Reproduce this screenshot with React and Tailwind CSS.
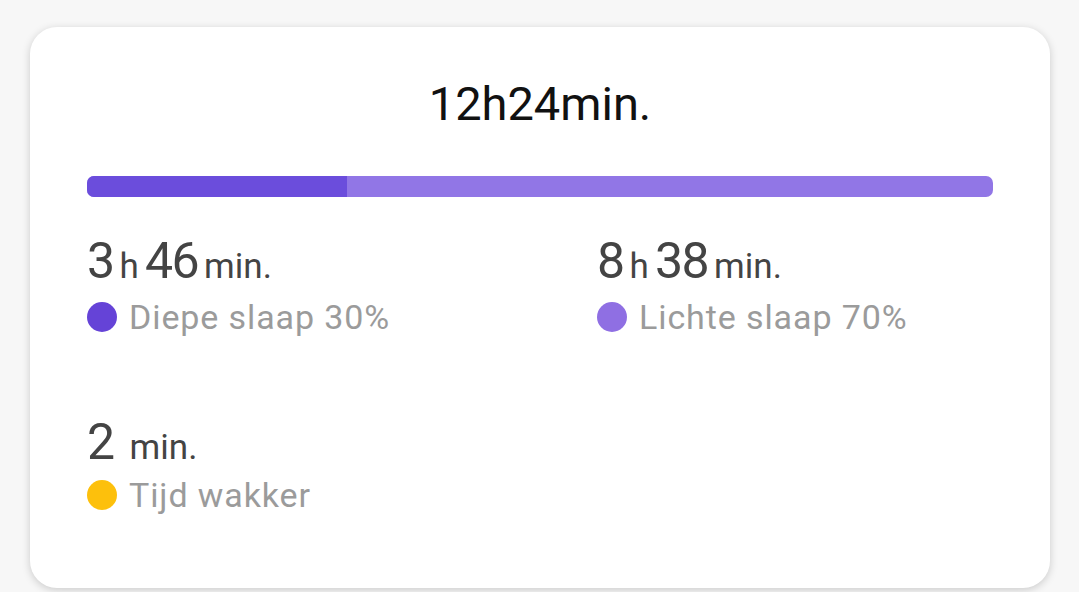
import React from 'react';

const font = { fontFamily: 'Roboto, "Noto Sans", sans-serif' };

const Stat = ({ parts, label, dot, labelGap = 'mt-[8px]' }) => (
    <div>
        <div className="flex items-baseline text-[#444] h-[56px] leading-[56px]">
            {parts.map((p, i) =>
                p.unit ? (
                    <span key={i} className={`text-[35px] ${p.cls || 'mx-[6px]'}`}>{p.text}</span>
                ) : (
                    <span key={i} className="text-[50px] tracking-[-1.5px]">{p.text}</span>
                )
            )}
        </div>
        <div className={`flex items-center ${labelGap}`}>
            <span className={`w-[30px] h-[30px] rounded-full ${dot}`} />
            <span className="ml-[12px] text-[34px] leading-[40px] tracking-[0.9px] text-[#9b9b9b]">{label}</span>
        </div>
    </div>
);

const App = () => {
    return (
        <div style={font} className="min-h-screen bg-[#f7f7f7] pl-[30px] pr-[29px] pt-[27px]">
            <div className="bg-white rounded-[27px] shadow-[0_2px_8px_rgba(0,0,0,0.18)] px-[57px] pt-[49px] pb-[73px]">
                {/* Total */}
                <div className="text-center text-[47px] leading-[56px] text-[#111]">12h24min.</div>

                {/* Deep / light split bar */}
                <div className="mt-[44px] h-[21px] rounded-[7px] overflow-hidden flex bg-[#9176e6]">
                    <div className="w-[260px] bg-[#6b4ddc]" />
                </div>

                <div className="mt-[36px] grid grid-cols-[510px_1fr]">
                    <Stat
                        parts={[{ text: '3' }, { text: 'h', unit: true }, { text: '46' }, { text: 'min.', unit: true }]}
                        label="Diepe slaap 30%"
                        dot="bg-[#6543d7]"
                    />
                    <Stat
                        parts={[{ text: '8' }, { text: 'h', unit: true }, { text: '38' }, { text: 'min.', unit: true }]}
                        label="Lichte slaap 70%"
                        dot="bg-[#8f6fe3]"
                    />
                    <div className="mt-[77px]">
                        <Stat
                            parts={[{ text: '2' }, { text: 'min.', unit: true, cls: 'ml-[16px]' }]}
                            label="Tijd wakker"
                            dot="bg-[#fdc00c]"
                            labelGap="mt-[5px]"
                        />
                    </div>
                </div>
            </div>
        </div>
    );
};

export default App;
